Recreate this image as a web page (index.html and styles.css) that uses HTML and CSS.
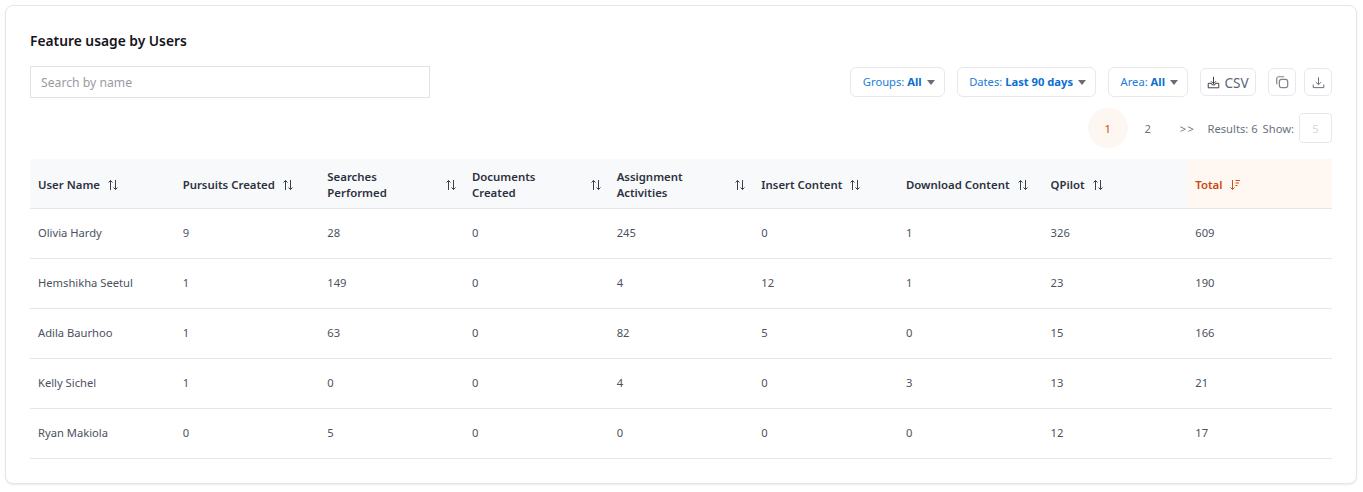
FILE: index.html
```html
<!DOCTYPE html>
<html lang="en">
<head>
<meta charset="utf-8">
<title>Feature usage by Users</title>
<link rel="stylesheet" href="styles.css">
</head>
<body>
<main class="card">
  <h1 class="title">Feature usage by Users</h1>
  <div class="toolbar">
    <input class="search" type="text" placeholder="Search by name">
    <div class="actions">
      <button class="filter">Groups: <b>All</b><i class="caret"></i></button>
      <button class="filter">Dates: <b>Last 90 days</b><i class="caret"></i></button>
      <button class="filter">Area: <b>All</b><i class="caret"></i></button>
      <button class="tool csv"><svg class="ic" viewBox="0 0 16 16"><path d="M8 1v8.500M5 6.500l3 3 3-3M1.500 9V14.500h13V9h-4l-1 2h-3l-1-2z" fill="none" stroke="#3c3c44" stroke-width="1.200"/></svg><span>CSV</span></button>
      <button class="tool square"><svg class="ic wide" viewBox="0 0 16 16"><rect x="5" y="5" width="9.500" height="9.500" rx="2.500" fill="none" stroke="#83838e" stroke-width="1.400"/><path d="M10.500 2H4A2.200 2.200 0 0 0 2 4v6.500" fill="none" stroke="#83838e" stroke-width="1.400"/></svg></button>
      <button class="tool square"><svg class="ic" viewBox="0 0 16 16"><path d="M8 1.500v9M4.800 7.500 8 10.700l3.200-3.200M1.500 10.500v3.800h13v-3.800" fill="none" stroke="#6b6b75" stroke-width="1.200"/></svg></button>
    </div>
  </div>
  <div class="pager">
    <span class="page current">1</span>
    <span class="page">2</span>
    <span class="next">&gt;&gt;</span>
    <span class="results">Results: 6</span>
    <span class="show">Show:</span>
    <span class="size">5</span>
  </div>
  <table class="grid">
    <thead>
      <tr>
        <th><div class="head"><span>User Name</span><svg class="sort" viewBox="0 0 12 12"><path d="M3.500 11V1.500M1.500 3.500l2-2 2 2M8.500 1v9.500M6.500 8.500l2 2 2-2"/></svg></div></th>
        <th><div class="head"><span>Pursuits Created</span><svg class="sort" viewBox="0 0 12 12"><path d="M3.500 11V1.500M1.500 3.500l2-2 2 2M8.500 1v9.500M6.500 8.500l2 2 2-2"/></svg></div></th>
        <th><div class="head wrap"><span>Searches<br>Performed</span><svg class="sort" viewBox="0 0 12 12"><path d="M3.500 11V1.500M1.500 3.500l2-2 2 2M8.500 1v9.500M6.500 8.500l2 2 2-2"/></svg></div></th>
        <th><div class="head wrap"><span>Documents<br>Created</span><svg class="sort" viewBox="0 0 12 12"><path d="M3.500 11V1.500M1.500 3.500l2-2 2 2M8.500 1v9.500M6.500 8.500l2 2 2-2"/></svg></div></th>
        <th><div class="head wrap"><span>Assignment<br>Activities</span><svg class="sort" viewBox="0 0 12 12"><path d="M3.500 11V1.500M1.500 3.500l2-2 2 2M8.500 1v9.500M6.500 8.500l2 2 2-2"/></svg></div></th>
        <th><div class="head"><span>Insert Content</span><svg class="sort" viewBox="0 0 12 12"><path d="M3.500 11V1.500M1.500 3.500l2-2 2 2M8.500 1v9.500M6.500 8.500l2 2 2-2"/></svg></div></th>
        <th><div class="head"><span>Download Content</span><svg class="sort" viewBox="0 0 12 12"><path d="M3.500 11V1.500M1.500 3.500l2-2 2 2M8.500 1v9.500M6.500 8.500l2 2 2-2"/></svg></div></th>
        <th><div class="head"><span>QPilot</span><svg class="sort" viewBox="0 0 12 12"><path d="M3.500 11V1.500M1.500 3.500l2-2 2 2M8.500 1v9.500M6.500 8.500l2 2 2-2"/></svg></div></th>
        <th class="active"><div class="head"><span>Total</span><svg class="sort" viewBox="0 0 12 12"><path d="M3.500 1v9.500M1.500 8.500l2 2 2-2M6.500 1.500h4.500M6.500 4h3.500M6.500 6.500h2"/></svg></div></th>
      </tr>
    </thead>
    <tbody>
      <tr><td>Olivia Hardy</td><td>9</td><td>28</td><td>0</td><td>245</td><td>0</td><td>1</td><td>326</td><td>609</td></tr>
      <tr><td>Hemshikha Seetul</td><td>1</td><td>149</td><td>0</td><td>4</td><td>12</td><td>1</td><td>23</td><td>190</td></tr>
      <tr><td>Adila Baurhoo</td><td>1</td><td>63</td><td>0</td><td>82</td><td>5</td><td>0</td><td>15</td><td>166</td></tr>
      <tr><td>Kelly Sichel</td><td>1</td><td>0</td><td>0</td><td>4</td><td>0</td><td>3</td><td>13</td><td>21</td></tr>
      <tr><td>Ryan Makiola</td><td>0</td><td>5</td><td>0</td><td>0</td><td>0</td><td>0</td><td>12</td><td>17</td></tr>
    </tbody>
  </table>
</main>
</body>
</html>
```
FILE: styles.css
```css
* { box-sizing: border-box; }
html, body { margin: 0; height: 100%; background: #fff; }
body { padding: 5px 6px 7px 5px; font-family: "Noto Sans", "Open Sans", sans-serif; color: #3a3f4a; }
.card {
  height: 479px;
  padding: 25px 24px 24px;
  border: 1px solid #e6e6e9;
  border-radius: 8px;
  box-shadow: 0 1px 2px rgba(0, 0, 0, .08);
  background: #fff;
}
.title { margin: 0; font-size: 13.8px; line-height: 20px; font-weight: 600; color: #14141c; }
.toolbar { display: flex; justify-content: space-between; align-items: center; margin-top: 15px; height: 32px; }
.search {
  width: 400px; height: 32px; padding: 0 10px;
  border: 1px solid #e2e2e4; background: #fff;
  font: 12.2px "Noto Sans", sans-serif; color: #333; outline: 0;
}
.search::placeholder { color: #9a9a9f; opacity: 1; }
.actions { display: flex; align-items: center; }
button { font-family: inherit; background: #fff; padding: 0; cursor: pointer; }
.filter {
  display: flex; align-items: center; height: 30px; padding: 0 9px 2px 11.500px;
  margin-right: 12px; border: 1px solid #e8e8ec; border-radius: 6px;
  font-size: 11.2px; color: #1a7dd8; white-space: pre;
}
.filter b { font-weight: 700; color: #0b6fd1; }
.caret { width: 0; height: 0; margin: 2px 0 0 5px; border: 4.5px solid transparent; border-top: 5px solid #6b6b78; border-bottom: 0; }
.tool {
  display: flex; align-items: center; justify-content: center; height: 28px;
  border: 1px solid #e8e8ec; border-radius: 6px;
}
.csv { width: 56px; margin-right: 12px; gap: 4px; font-size: 13.6px; color: #5a6478; }
.square { width: 28px; }
.square + .square { margin-left: 8px; }
.ic { width: 13px; height: 13px; }
.ic.wide { width: 14px; height: 14px; }
.pager { display: flex; justify-content: flex-end; align-items: center; margin-top: 10px; height: 40px; font-size: 11.2px; color: #6b7080; }
.page { width: 40px; height: 40px; display: flex; align-items: center; justify-content: center; border-radius: 50%; }
.current { background: #fef6f1; color: #d8480a; }
.next { margin-left: 12px; letter-spacing: 1.500px; }
.results { margin-left: 12px; }
.show { margin-left: 5px; }
.size {
  width: 33px; height: 30px; margin-left: 5px; display: flex; align-items: center; justify-content: center;
  border: 1px solid #e8e8ec; border-radius: 4px; color: #d8d8dc;
}
.grid { width: 1302px; margin-top: 11px; border-collapse: collapse; table-layout: fixed; font-size: 11.2px; }
.grid th {
  height: 49px; padding: 3px 7px 0 8px; text-align: left; font-weight: 600; line-height: 16px; font-size: 11.4px;
  background: #f8f9fb; color: #2c3140; border-bottom: 1px solid #e6e6e9;
}
.grid th.active { background: #fff7f2; color: #c9480f; }
.head { display: flex; align-items: center; gap: 7px; white-space: nowrap; }
.head.wrap { justify-content: space-between; }
.sort { width: 12px; height: 12px; flex: none; fill: none; stroke: #3a3f4a; stroke-width: 1; }
.active .sort { stroke: #d4500f; }
.grid td { height: 50px; padding: 0 8px 2px; border-bottom: 1px solid #e6e6e9; color: #4b5160; }
```
